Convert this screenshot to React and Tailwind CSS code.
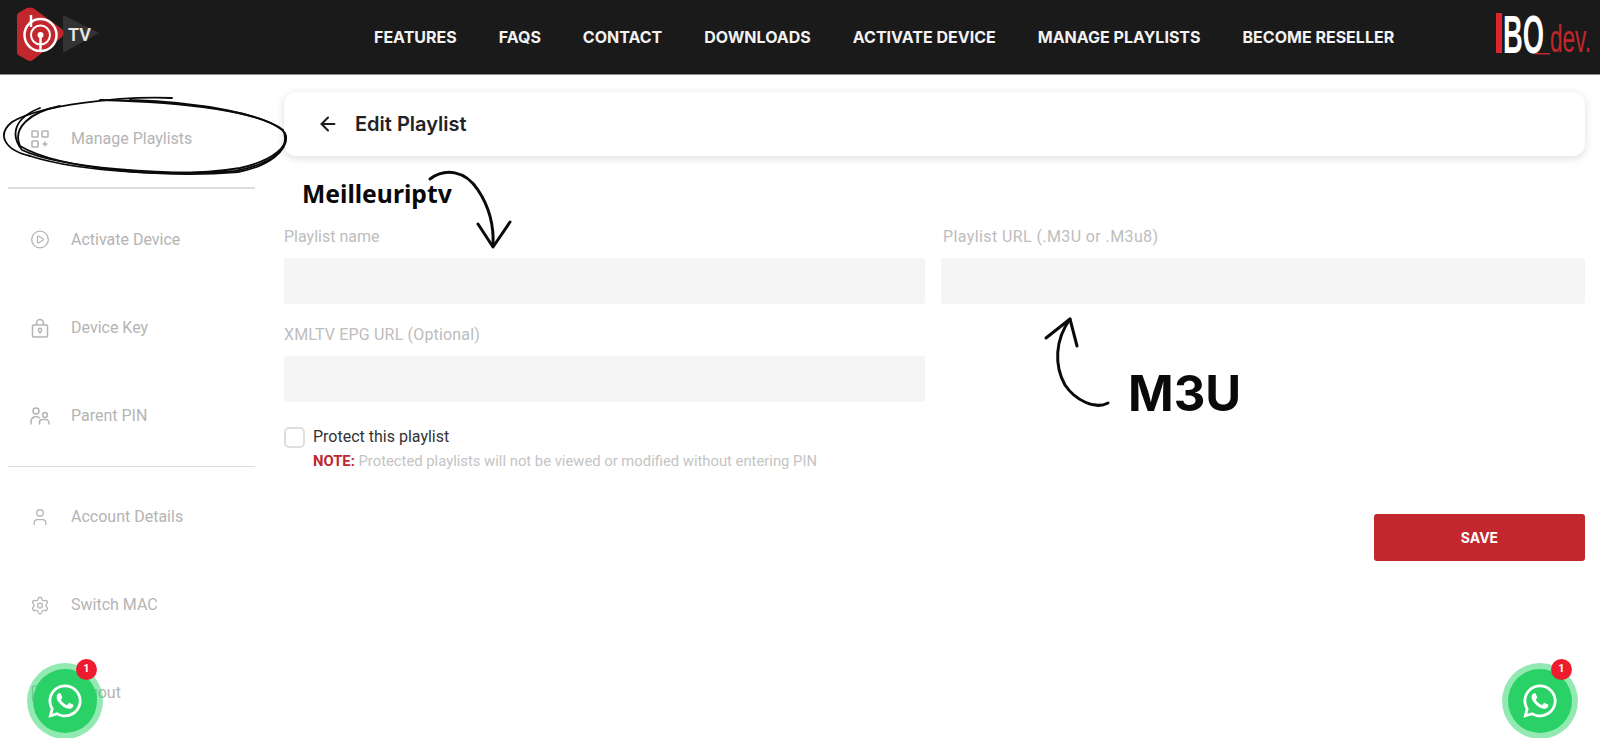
import React from "react";
import { ArrowLeft, CirclePlay, LogOut, Settings, User } from "lucide-react";
import { FaWhatsapp } from "react-icons/fa";

const navLinks = [
  "FEATURES",
  "FAQS",
  "CONTACT",
  "DOWNLOADS",
  "ACTIVATE DEVICE",
  "MANAGE PLAYLISTS",
  "BECOME RESELLER",
];

function GridPlusIcon() {
  return (
    <svg width="18" height="18" viewBox="0 0 18 18" fill="none" stroke="currentColor" strokeWidth="1.6">
      <rect x="1" y="1" width="6" height="6" rx="0.8" />
      <rect x="11" y="1" width="6" height="6" rx="0.8" />
      <rect x="1" y="11" width="6" height="6" rx="0.8" />
      <path d="M14 11.5v5M11.5 14h5" />
    </svg>
  );
}

function LockIcon() {
  return (
    <svg width="18" height="20" viewBox="0 0 18 20" fill="none" stroke="currentColor" strokeWidth="1.5">
      <rect x="1.5" y="7" width="15" height="12" rx="1" />
      <path d="M5.5 7V5a3.5 3.5 0 0 1 7 0v2" />
      <circle cx="9" cy="12" r="1.7" />
      <path d="M9 13.7V16" />
    </svg>
  );
}

function ParentIcon() {
  return (
    <svg width="20" height="18" viewBox="0 0 20 18" fill="none" stroke="currentColor" strokeWidth="1.5" strokeLinecap="round">
      <circle cx="6" cy="4" r="3" />
      <circle cx="15" cy="8" r="2.4" />
      <path d="M1 17v-2.500a5 5 0 0 1 8.500-3.500" />
      <path d="M9.500 17v-1.500a3 3 0 0 1 3-3h3a3.500 3.500 0 0 1 3.500 3.500V17" />
    </svg>
  );
}

function Logo() {
  return (
    <svg width="90" height="66" viewBox="0 0 90 66">
      <path d="M51 11L87 29L51 49Z" fill="#333" />
      <path d="M5 12Q5 9 8 8L15 4Q18 3 21 4L50 25Q53 29 50 33L21 56Q18 58 15 56L8 52Q5 51 5 48Z" fill="#c1272d" />
      <g fill="none" stroke="#fff">
        <circle cx="28.500" cy="31" r="16" strokeWidth="2.500" />
        <circle cx="28.500" cy="31" r="9.500" strokeWidth="2" />
        <path d="M28.500 33v14" strokeWidth="2.500" />
        <path d="M19 11v12" strokeWidth="2.500" />
      </g>
      <circle cx="28.500" cy="31" r="3" fill="#fff" />
      <text x="56" y="37" fill="#e5e5e5" fontSize="18" fontWeight="600" fontFamily="Roboto, sans-serif">TV</text>
    </svg>
  );
}

function BrandMark() {
  return (
    <svg width="100" height="50" viewBox="0 0 100 50">
      <rect x="1" y="1" width="6" height="40" fill="#e0242f" />
      <text x="8" y="41" fill="#fff" fontSize="54" fontWeight="700" fontFamily="Liberation Sans, sans-serif" textLength="41" lengthAdjust="spacingAndGlyphs">BO</text>
      <rect x="40" y="41" width="15" height="1.500" fill="#c1272d" />
      <text x="55" y="40" fill="#c1272d" fontSize="38" fontFamily="Liberation Sans, sans-serif" textLength="41" lengthAdjust="spacingAndGlyphs">dev.</text>
    </svg>
  );
}

function SideItem({ icon, label }) {
  return (
    <div className="flex h-[88px] items-center pl-[30px] text-[#b4b4b4]">
      <span className="flex w-[20px] justify-center">{icon}</span>
      <span className="ml-[21px] font-['Roboto',sans-serif] text-[16px]">{label}</span>
    </div>
  );
}

function Divider({ className }) {
  return <div className={`ml-2 h-[1.5px] w-[247px] bg-[#dcdcdc] ${className}`} />;
}

function Field({ label, labelClass }) {
  return (
    <div>
      <label className={`block h-[21px] font-['Roboto',sans-serif] text-[16px] leading-[21px] text-[#bdbdbd] ${labelClass}`}>{label}</label>
      <div className="mt-[11px] h-[46px] rounded-[3px] bg-[#f5f5f5]" />
    </div>
  );
}

function WhatsappButton({ className }) {
  return (
    <div className={`absolute top-[663px] flex h-[76px] w-[76px] items-center justify-center rounded-full bg-[#25d366]/50 ${className}`}>
      <div className="flex h-[64px] w-[64px] items-center justify-center rounded-full bg-[#29d166] text-white">
        <FaWhatsapp size={38} />
      </div>
      <span className="absolute left-[49px] top-[-4px] flex h-[21px] w-[21px] items-center justify-center rounded-full bg-[#ee1c2e] font-['Roboto',sans-serif] text-[11px] font-bold text-white">
        1
      </span>
    </div>
  );
}

export default function App() {
  const iconProps = { size: 21, strokeWidth: 1.5 };

  return (
    <div className="relative flex h-[738px] flex-col overflow-hidden bg-white">
      <header className="flex h-[75px] shrink-0 items-center border-b border-[#8a8a8a] bg-[#1a1a1a]">
        <div className="ml-[12px] w-[362px]">
          <Logo />
        </div>
        <nav className="flex gap-[42px] font-['Inter',sans-serif] text-[16px] font-bold text-[#f2f2f2]">
          {navLinks.map((link) => (
            <a key={link} href="#" className="whitespace-nowrap">
              {link}
            </a>
          ))}
        </nav>
        <div className="ml-auto mr-[5px]">
          <BrandMark />
        </div>
      </header>

      <div className="flex min-h-0 flex-1">
        <aside className="w-[284px] shrink-0 pt-[20px]">
          <SideItem icon={<GridPlusIcon />} label="Manage Playlists" />
          <Divider className="mb-[7px] mt-[4px]" />
          <SideItem icon={<CirclePlay {...iconProps} />} label="Activate Device" />
          <SideItem icon={<LockIcon />} label="Device Key" />
          <SideItem icon={<ParentIcon />} label="Parent PIN" />
          <Divider className="my-[6px]" />
          <SideItem icon={<User size={24} strokeWidth={1.5} />} label="Account Details" />
          <SideItem icon={<Settings {...iconProps} />} label="Switch MAC" />
          <SideItem icon={<LogOut {...iconProps} />} label="Logout" />
        </aside>

        <main className="flex-1 pr-[15px] pt-[17px]">
          <div className="flex h-[64px] items-center rounded-[12px] bg-white pl-[33px] shadow-[0_2px_8px_rgba(0,0,0,0.14)]">
            <ArrowLeft size={22} strokeWidth={2.25} className="text-[#1d1d1d]" />
            <h1 className="ml-[16px] font-['Inter',sans-serif] text-[20px] font-semibold text-[#222]">Edit Playlist</h1>
          </div>

          <div className="mt-[70px] grid grid-cols-[641px_1fr] gap-x-[16px] gap-y-[20px]">
            <Field label="Playlist name" />
            <Field label="Playlist URL (.M3U or .M3u8)" labelClass="ml-[2px] tracking-[0.4px]" />
            <Field label="XMLTV EPG URL (Optional)" labelClass="tracking-[0.17px]" />
          </div>

          <div className="mt-[23px] flex items-center">
            <span className="h-[21px] w-[21px] rounded-[5px] border-2 border-[#dedede] bg-white" />
            <span className="ml-[8px] font-['Roboto',sans-serif] text-[16px] text-[#333]">Protect this playlist</span>
          </div>
          <p className="ml-[29px] mt-[1px] font-['Roboto',sans-serif] text-[14.8px] text-[#c4c4c4]">
            <span className="font-bold text-[#c1272d]">NOTE: </span>
            Protected playlists will not be viewed or modified without entering PIN
          </p>

          <div className="mt-[42px] flex justify-end">
            <button className="h-[47px] w-[211px] rounded-[3px] bg-[#c1272d] font-['Inter',sans-serif] text-[14px] font-bold text-white">
              SAVE
            </button>
          </div>
        </main>
      </div>

      {/* hand drawn notes on top of the screenshot */}
      <svg className="pointer-events-none absolute left-0 top-0" width="1600" height="738" fill="none" stroke="#0a0a0a" strokeLinecap="round" strokeLinejoin="round">
        <g strokeWidth="1.8">
          <path d="M172 98C120 96 40 105 12 122C-4 135 5 150 30 156C80 172 180 178 240 168C275 160 290 145 285 133C270 115 200 102 130 100" />
          <path d="M40 108C14 118 10 135 22 150C60 168 170 176 235 171C275 163 291 148 283 130C260 112 190 102 100 100" />
          <path d="M60 106C30 112 12 128 20 146C60 170 170 178 238 172C270 166 288 150 286 136" />
        </g>
        <g strokeWidth="3">
          <path d="M430 179C445 168 465 170 478 190C490 208 494 228 493 246" />
          <path d="M478 224L493 247L510 222" />
          <path d="M1108 403C1095 410 1075 400 1065 385C1054 365 1055 340 1070 319" />
          <path d="M1046 338L1070 319L1077 346" />
        </g>
      </svg>
      <span className="absolute left-[302px] top-[177px] font-['Noto_Sans',sans-serif] text-[24.7px] font-bold leading-[34px] text-[#0a0a0a]">Meilleuriptv</span>
      <span className="absolute left-[1128px] top-[364px] font-['Inter',sans-serif] text-[49px] font-bold leading-[60px] text-[#0a0a0a]">M3U</span>

      <WhatsappButton className="left-[27px]" />
      <WhatsappButton className="left-[1502px]" />
    </div>
  );
}
